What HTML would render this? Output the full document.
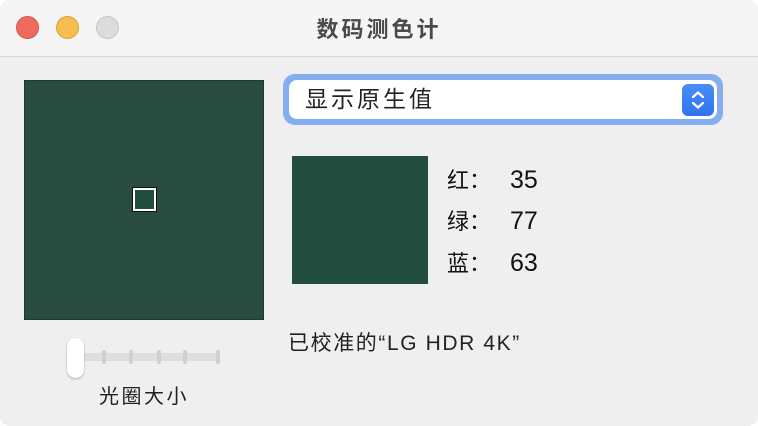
<!DOCTYPE html>
<html><head><meta charset="utf-8"><style>
body{margin:0;width:758px;height:426px;background:#fff;font-family:"Liberation Sans","Noto Sans CJK SC",sans-serif;overflow:hidden}
.win{position:absolute;left:0;top:0;width:758px;height:426px;background:#efefef;border-radius:10px;overflow:hidden}
.tb{position:absolute;left:0;top:0;width:758px;height:56px;background:#f5f5f5;border-bottom:1px solid #d6d6d6}
.dot{position:absolute;top:16px;width:23px;height:23px;border-radius:50%;box-sizing:border-box}
.title{position:absolute;left:0;width:758px;top:12px;text-align:center;font-size:22px;letter-spacing:3px;color:#4a4a4a;font-weight:bold}
.abs{position:absolute}
.t{position:absolute;font-size:22px;color:#111;line-height:30px}
.n{position:absolute;font-size:25px;color:#111;line-height:30px}
</style></head><body><div class="win">
<div class="tb">
<div class="dot" style="left:16px;background:#ee6a5e;border:1px solid #d35449"></div>
<div class="dot" style="left:56px;background:#f5be4f;border:1px solid #d9a137"></div>
<div class="dot" style="left:96px;background:#dcdcdc;border:1px solid #c4c4c4"></div>
<div class="title">数码测色计</div>
</div>
<div class="abs" style="left:24px;top:80px;width:240px;height:240px;background:#294c40;box-sizing:border-box;border:1px solid #1d3a30"></div>
<div class="abs" style="left:133px;top:188px;width:23px;height:23px;box-sizing:border-box;border:2px solid #fff;outline:1px solid #111;background:#234d3f"></div>
<div class="abs" style="left:283px;top:74px;width:440px;height:51px;border-radius:12px;background:#85aef0"></div>
<div class="abs" style="left:289px;top:80px;width:428px;height:39px;border-radius:8px;background:#fff"></div>
<div class="t" style="left:305px;top:84px;font-size:23px;letter-spacing:3px;color:#222">显示原生值</div>
<div class="abs" style="left:682px;top:84px;width:32px;height:32px;border-radius:6px;background:linear-gradient(#4a8cf7,#2f73f0)">
<svg width="32" height="32"><path d="M11 13 L16 8.5 L21 13 M11 19 L16 23.5 L21 19" stroke="#fff" stroke-width="2.2" fill="none" stroke-linecap="round" stroke-linejoin="round"/></svg></div>
<div class="abs" style="left:292px;top:156px;width:136px;height:128px;background:#234d3f"></div>
<div class="t" style="left:447px;top:166px">红：</div><div class="n" style="left:510px;top:165px">35</div>
<div class="t" style="left:447px;top:207px">绿：</div><div class="n" style="left:510px;top:206px">77</div>
<div class="t" style="left:447px;top:249px">蓝：</div><div class="n" style="left:510px;top:248px">63</div>
<div class="t" style="left:288px;top:329px;font-size:21px;letter-spacing:1.6px;color:#222">已校准的“LG HDR 4K”</div>
<div class="abs" style="left:80px;top:353px;width:140px;height:8px;background:#dedede;border-radius:4px"></div>
<div class="abs" style="left:102px;top:350px;width:4px;height:14px;background:#d0d0d0;border-radius:2px"></div>
<div class="abs" style="left:129px;top:350px;width:4px;height:14px;background:#d0d0d0;border-radius:2px"></div>
<div class="abs" style="left:157px;top:350px;width:4px;height:14px;background:#d0d0d0;border-radius:2px"></div>
<div class="abs" style="left:183px;top:350px;width:4px;height:14px;background:#d0d0d0;border-radius:2px"></div>
<div class="abs" style="left:216px;top:350px;width:4px;height:14px;background:#d0d0d0;border-radius:2px"></div>
<div class="abs" style="left:67px;top:338px;width:17px;height:40px;background:#fff;border-radius:9px;box-shadow:0 1px 2px rgba(0,0,0,.3)"></div>
<div class="t" style="left:99px;top:382px;font-size:20px;letter-spacing:2.5px;color:#222">光圈大小</div>
</div></body></html>
